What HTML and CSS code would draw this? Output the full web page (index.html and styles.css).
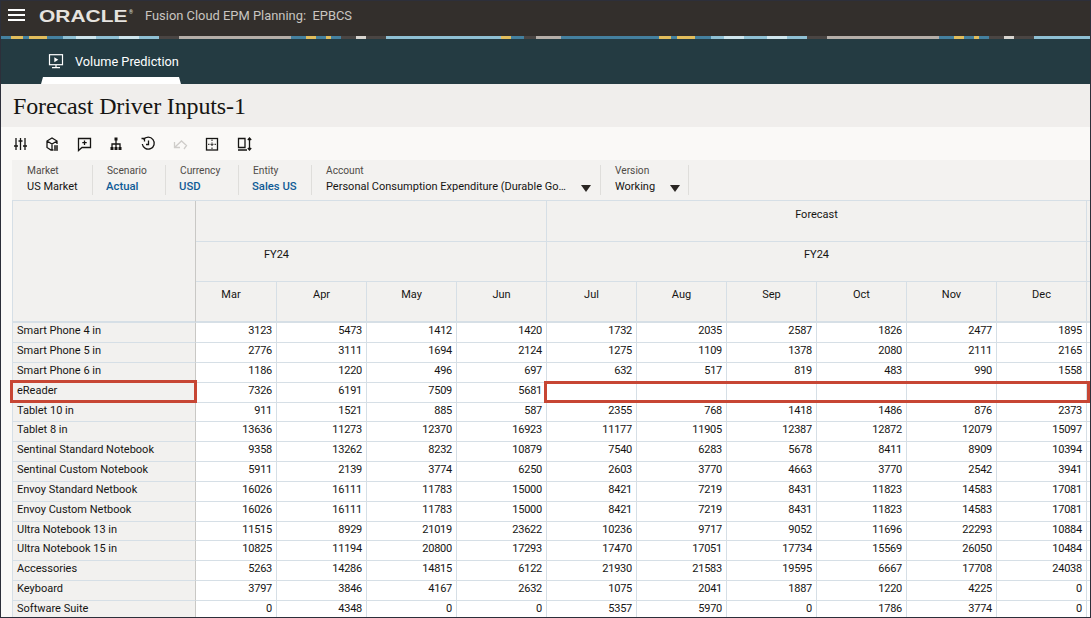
FILE: index.html
```html
<!DOCTYPE html>
<html lang="en">
<head>
<meta charset="utf-8">
<title>Forecast Driver Inputs-1</title>
<link rel="stylesheet" href="styles.css">
</head>
<body>
<div class="page">
  <header class="topbar">
    <div class="burger"><span></span><span></span><span></span></div>
    <div class="logo"><span class="logo-text">ORACLE</span><span class="logo-r">®</span></div>
    <div class="app-name">Fusion Cloud EPM Planning:&nbsp; EPBCS</div>
  </header>
  <div class="strip"></div>
  <nav class="tabbar">
    <div class="tab">
      <div class="tab-body">
        <svg class="tab-icon" viewBox="0 0 16 15" width="16" height="15"><rect x="1.5" y="0.7" width="13" height="10" fill="none" stroke="#fff" stroke-width="1.2"/><path d="M6.3 3.2v5l4-2.5z" fill="#fff"/><path d="M8 11v2M4 13.6h8" stroke="#fff" stroke-width="1.2" fill="none"/></svg>
        <span class="tab-label">Volume Prediction</span>
      </div>
      <div class="tab-mark"></div>
    </div>
  </nav>
  <div class="titlebar"><h1 class="title">Forecast Driver Inputs-1</h1></div>
  <div class="toolbar">
    <svg class="tool" viewBox="0 0 16 16"><path d="M4 2v12M8.5 2v12M13 2v12M2 10h4M6.500 5h4M11 10h4" /></svg>
    <svg class="tool" viewBox="0 0 16 16"><path d="M9.500 14H7L3 11.500V5l5-3 5 3v3M3 5l5 3 5-3M8 8v6"/><path class="thin" d="M10 10h4M10 12h4M10 14h4M11 9.500v5M13 9.500v5"/></svg>
    <svg class="tool" viewBox="0 0 16 16"><path d="M2.500 2.500h12v9H6L2.500 14.500z"/><path d="M8.500 4.500v4.500M6.300 6.700h4.400"/></svg>
    <svg class="tool" viewBox="0 0 16 16"><rect class="solid" x="6.500" y="1.500" width="3" height="3"/><rect class="solid" x="2.500" y="11" width="3" height="3"/><rect class="solid" x="6.500" y="11" width="3" height="3"/><rect class="solid" x="10.500" y="11" width="3" height="3"/><path d="M8 4v7M4 11V8h8v3"/></svg>
    <svg class="tool" viewBox="0 0 16 16"><path d="M3.500 3.500A6 6 0 1 1 2.300 8"/><path d="M1.500 2.500h3v3M8.500 4.500V8.500H6"/></svg>
    <svg class="tool tool-off" viewBox="0 0 16 16"><path d="M2.500 6v5.500h5.500M2.800 11.200L9.500 5l5 4.500-2.500 3.500"/></svg>
    <svg class="tool" viewBox="0 0 16 16"><rect x="2.500" y="2.500" width="11" height="11.500"/><path class="thin" d="M8 3.500v1.500M8 6.500v1M8 9v1M8 11.500v1.500M4 8.300h1.500M6.500 8.300h3M10.500 8.300h1.500"/></svg>
    <svg class="tool" viewBox="0 0 16 16"><path d="M9 2.500H2.500v9H9zM2 14h9M13.500 2v12M11.800 4l1.700-2 1.700 2M11.800 12l1.700 2 1.700-2"/></svg>
  </div>
  <div class="pov">
    <div class="pov-item pov-w1"><span class="pov-label">Market</span><span class="pov-value">US Market</span></div>
    <div class="pov-item pov-w2"><span class="pov-label">Scenario</span><span class="pov-value pov-link">Actual</span></div>
    <div class="pov-item pov-w2"><span class="pov-label">Currency</span><span class="pov-value pov-link">USD</span></div>
    <div class="pov-item pov-w2"><span class="pov-label">Entity</span><span class="pov-value pov-link">Sales US</span></div>
    <div class="pov-item pov-w3"><span class="pov-label">Account</span><span class="pov-row"><span class="pov-value pov-long">Personal Consumption Expenditure (Durable Go…</span><i class="caret"></i></span></div>
    <div class="pov-item pov-w4"><span class="pov-label">Version</span><span class="pov-row"><span class="pov-value pov-short">Working</span><i class="caret"></i></span></div>
  </div>
  <div class="sheet-wrap">
    <div class="sheet">
      <div class="corner"></div>
      <div class="hd hd-blank"></div>
      <div class="hd hd-fc">Forecast</div>
      <div class="hd hd-end"></div>
      <div class="hd hd-fy1">FY24</div>
      <div class="hd hd-fy2">FY24</div>
      <div class="hd hd-end"></div>
      <div class="hd hd-m hd-mar">Mar</div><div class="hd hd-m">Apr</div><div class="hd hd-m">May</div><div class="hd hd-m">Jun</div><div class="hd hd-m">Jul</div><div class="hd hd-m">Aug</div><div class="hd hd-m">Sep</div><div class="hd hd-m">Oct</div><div class="hd hd-m">Nov</div><div class="hd hd-m">Dec</div><div class="hd hd-end hd-m-end"></div>

      <div class="lb">Smart Phone 4 in</div><div class="c">3123</div><div class="c">5473</div><div class="c">1412</div><div class="c">1420</div><div class="c">1732</div><div class="c">2035</div><div class="c">2587</div><div class="c">1826</div><div class="c">2477</div><div class="c">1895</div><div class="e"></div>
      <div class="lb">Smart Phone 5 in</div><div class="c">2776</div><div class="c">3111</div><div class="c">1694</div><div class="c">2124</div><div class="c">1275</div><div class="c">1109</div><div class="c">1378</div><div class="c">2080</div><div class="c">2111</div><div class="c">2165</div><div class="e"></div>
      <div class="lb">Smart Phone 6 in</div><div class="c">1186</div><div class="c">1220</div><div class="c">496</div><div class="c">697</div><div class="c">632</div><div class="c">517</div><div class="c">819</div><div class="c">483</div><div class="c">990</div><div class="c">1558</div><div class="e"></div>
      <div class="lb">eReader</div><div class="c">7326</div><div class="c">6191</div><div class="c">7509</div><div class="c">5681</div><div class="c"></div><div class="c"></div><div class="c"></div><div class="c"></div><div class="c"></div><div class="c"></div><div class="e"></div>
      <div class="lb">Tablet 10 in</div><div class="c">911</div><div class="c">1521</div><div class="c">885</div><div class="c">587</div><div class="c">2355</div><div class="c">768</div><div class="c">1418</div><div class="c">1486</div><div class="c">876</div><div class="c">2373</div><div class="e"></div>
      <div class="lb">Tablet 8 in</div><div class="c">13636</div><div class="c">11273</div><div class="c">12370</div><div class="c">16923</div><div class="c">11177</div><div class="c">11905</div><div class="c">12387</div><div class="c">12872</div><div class="c">12079</div><div class="c">15097</div><div class="e"></div>
      <div class="lb">Sentinal Standard Notebook</div><div class="c">9358</div><div class="c">13262</div><div class="c">8232</div><div class="c">10879</div><div class="c">7540</div><div class="c">6283</div><div class="c">5678</div><div class="c">8411</div><div class="c">8909</div><div class="c">10394</div><div class="e"></div>
      <div class="lb">Sentinal Custom Notebook</div><div class="c">5911</div><div class="c">2139</div><div class="c">3774</div><div class="c">6250</div><div class="c">2603</div><div class="c">3770</div><div class="c">4663</div><div class="c">3770</div><div class="c">2542</div><div class="c">3941</div><div class="e"></div>
      <div class="lb">Envoy Standard Netbook</div><div class="c">16026</div><div class="c">16111</div><div class="c">11783</div><div class="c">15000</div><div class="c">8421</div><div class="c">7219</div><div class="c">8431</div><div class="c">11823</div><div class="c">14583</div><div class="c">17081</div><div class="e"></div>
      <div class="lb">Envoy Custom Netbook</div><div class="c">16026</div><div class="c">16111</div><div class="c">11783</div><div class="c">15000</div><div class="c">8421</div><div class="c">7219</div><div class="c">8431</div><div class="c">11823</div><div class="c">14583</div><div class="c">17081</div><div class="e"></div>
      <div class="lb">Ultra Notebook 13 in</div><div class="c">11515</div><div class="c">8929</div><div class="c">21019</div><div class="c">23622</div><div class="c">10236</div><div class="c">9717</div><div class="c">9052</div><div class="c">11696</div><div class="c">22293</div><div class="c">10884</div><div class="e"></div>
      <div class="lb">Ultra Notebook 15 in</div><div class="c">10825</div><div class="c">11194</div><div class="c">20800</div><div class="c">17293</div><div class="c">17470</div><div class="c">17051</div><div class="c">17734</div><div class="c">15569</div><div class="c">26050</div><div class="c">10484</div><div class="e"></div>
      <div class="lb">Accessories</div><div class="c">5263</div><div class="c">14286</div><div class="c">14815</div><div class="c">6122</div><div class="c">21930</div><div class="c">21583</div><div class="c">19595</div><div class="c">6667</div><div class="c">17708</div><div class="c">24038</div><div class="e"></div>
      <div class="lb">Keyboard</div><div class="c">3797</div><div class="c">3846</div><div class="c">4167</div><div class="c">2632</div><div class="c">1075</div><div class="c">2041</div><div class="c">1887</div><div class="c">1220</div><div class="c">4225</div><div class="c">0</div><div class="e"></div>
      <div class="lb">Software Suite</div><div class="c">0</div><div class="c">4348</div><div class="c">0</div><div class="c">0</div><div class="c">5357</div><div class="c">5970</div><div class="c">0</div><div class="c">1786</div><div class="c">3774</div><div class="c">0</div><div class="e"></div>
    </div>
    <div class="mark mark-label"></div>
    <div class="mark mark-cells"></div>
  </div>
</div>
</body>
</html>
```
FILE: styles.css
```css
* { box-sizing: border-box; }
html, body { margin: 0; padding: 0; }
body { background: #faf9f7; font-family: Roboto, "Liberation Sans", sans-serif; color: #161513; }
.page { width: 1091px; height: 618px; border: 1px solid #2d2f3a; overflow: hidden; display: flex; flex-direction: column; background: #faf9f7; }

.topbar { height: 35px; flex: none; background: #332f2c; display: flex; align-items: center; color: #c9c5c0; }
.burger { width: 17px; margin-left: 7px; margin-top: -7px; display: flex; flex-direction: column; gap: 3px; }
.burger span { display: block; height: 2px; background: #fff; }
.logo { width: 106px; margin-left: 14px; display: flex; align-items: flex-start; margin-top: -6px; color: #e6e3df; }
.logo-text { display: block; width: 70px; margin-right: 20px; font: bold 16.500px/16px "Liberation Sans", sans-serif; white-space: nowrap; transform: scaleX(1.27); transform-origin: left center; }
.logo-r { font-size: 5px; line-height: 8px; }
.app-name { font-size: 12.900px; margin-top: -7px; white-space: nowrap; }

.strip { height: 3px; flex: none; background: repeating-linear-gradient(90deg,
  #44809f 0 10px, #e2bd5c 10px 22px, #44809f 22px 28px, #e2bd5c 28px 46px, #44809f 46px 62px,
  #8fc0d4 62px 75px, #cfe6ee 75px 95px, #8fc0d4 95px 118px, #cfe6ee 118px 138px, #8fc0d4 138px 158px,
  #4a4543 158px 178px, #b5aea8 178px 290px, #44809f 290px 305px, #e2bd5c 305px 315px, #44809f 315px 325px,
  #e2bd5c 325px 330px, #44809f 330px 340px, #4a4543 340px 355px, #d8d4cf 355px 365px, #4a4543 365px 385px,
  #8fc0d4 385px 500px, #e2bd5c 500px 510px, #44809f 510px 523px, #4a4543 523px 535px, #b5aea8 535px 560px,
  #44809f 560px 648px); }

.tabbar { height: 45px; flex: none; background: #243b42; display: flex; padding-left: 40px; }
.tab { width: 140px; display: flex; flex-direction: column; justify-content: flex-end; }
.tab-body { display: flex; align-items: center; flex: 1; padding: 6px 0 0 7px; gap: 11px; }
.tab-icon { flex: none; }
.tab-label { color: #fff; font-size: 12.750px; white-space: nowrap; }
.tab-mark { height: 7px; background: #fff; clip-path: polygon(2px 0, 138px 0, 100% 100%, 0 100%); }

.titlebar { height: 43px; flex: none; background: #f0eeec; display: flex; align-items: center; padding-left: 12px; }
.title { margin: 0; font: normal 24px/30px "Liberation Serif", serif; letter-spacing: -0.13px; color: #161513; white-space: nowrap; }

.toolbar { height: 33px; flex: none; display: flex; align-items: center; gap: 16px; padding-left: 11px; background: #faf9f7; }
.tool { width: 16px; height: 16px; flex: none; fill: none; stroke: #161513; stroke-width: 1.3; }
.tool .thin { stroke-width: 1; }
.tool .solid { fill: #161513; stroke: none; }
.tool-off { stroke: #cfcdca; }

.pov { height: 40px; flex: none; margin-left: 11px; background: #f3f2f0; display: flex; align-items: center; }
.pov-item { height: 30px; border-right: 1px solid #dfdedb; padding-left: 14px; display: flex; flex-direction: column; font-size: 11px; line-height: 14px; white-space: nowrap; }
.pov-w1 { width: 81px; padding-left: 15px; }
.pov-w2 { width: 73px; }
.pov-w3 { width: 289px; }
.pov-w4 { width: 88px; }
.pov-label { color: #4f4b47; font-size: 10.200px; margin-top: -1px; }
.pov-value { color: #161513; margin-top: 2px; }
.pov-link { color: #0f5b96; font-weight: 500; font-size: 11.300px; margin-top: 2px; margin-left: -1px; }
.pov-long { width: 255px; overflow: hidden; }
.pov-short { width: 55px; }
.pov-row { display: flex; align-items: center; }
.caret { display: block; width: 0; height: 0; border-left: 5px solid transparent; border-right: 5px solid transparent; border-top: 7px solid #2a2623; margin-top: 5px; }

.sheet-wrap { position: relative; flex: 1; min-height: 0; margin-left: 11px; }
.sheet { display: grid; grid-template-columns: 183px 81px repeat(9, 90px) 1fr; grid-template-rows: 41px 40px 41px 20px repeat(14, 19.850px); border-top: 1px solid #d6dfe6; border-left: 1px solid #d6dfe6; font-size: 11px; line-height: 14px; }
.corner { grid-row: 1 / span 3; background: #f2f1ef; border-right: 1px solid #c9c8c5; border-bottom: 2px solid #d6dfe6; }
.hd { background: #f2f1ef; border-right: 1px solid #d6dfe6; border-bottom: 1px solid #d6dfe6; text-align: center; white-space: nowrap; }
.hd-blank { grid-column: span 4; }
.hd-fc { grid-column: span 6; padding-top: 7px; }
.hd-fy1 { grid-column: span 4; text-align: left; padding: 6px 0 0 68px; }
.hd-fy2 { grid-column: span 6; padding-top: 6px; }
.hd-m { padding-top: 6px; border-bottom: 2px solid #d6dfe6; }
.hd-mar { padding-right: 10px; }
.hd-end { border-right: 0; }
.hd-m-end { border-bottom: 2px solid #d6dfe6; }
.lb { background: #f2f1ef; border-right: 1px solid #c9c8c5; border-bottom: 1px solid #d6dfe6; padding: 1px 0 0 4px; white-space: nowrap; }
.c { background: #fff; border-right: 1px solid #d6dfe6; border-bottom: 1px solid #d6dfe6; padding: 1px 4px 0 0; text-align: right; letter-spacing: -0.25px; }
.e { background: #fff; border-bottom: 1px solid #d6dfe6; }

.mark { position: absolute; border: 3px solid #c74634; }
.mark-label { left: -2px; top: 180px; width: 187px; height: 23px; }
.mark-cells { left: 532px; top: 181px; width: 546px; height: 22px; }
```
